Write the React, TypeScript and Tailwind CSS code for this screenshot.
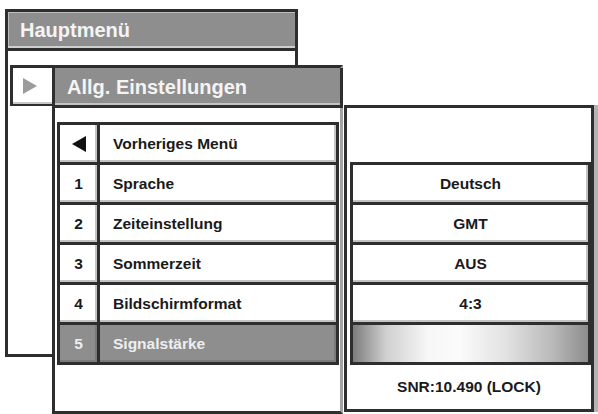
const DARK = "border-[#2e2e2e]";

type Row = { n: string; label: string; value?: string; selected?: boolean; gauge?: boolean };

const rows: Row[] = [
  { n: "◀", label: "Vorheriges Menü" },
  { n: "1", label: "Sprache", value: "Deutsch" },
  { n: "2", label: "Zeiteinstellung", value: "GMT" },
  { n: "3", label: "Sommerzeit", value: "AUS" },
  { n: "4", label: "Bildschirmformat", value: "4:3" },
  { n: "5", label: "Signalstärke", selected: true, gauge: true },
];

function LeftArrow() {
  return (
    <svg width="16" height="16" viewBox="0 0 16 16">
      <polygon points="15,0 15,16 1,8" fill="#111" />
    </svg>
  );
}

function RightArrow() {
  return (
    <svg width="15" height="16" viewBox="0 0 15 16">
      <polygon points="0,0 0,16 14,8" fill="#9c9c9c" />
    </svg>
  );
}

export default function App() {
  return (
    <div
      className="relative w-[598px] h-[414px] bg-white overflow-hidden"
      style={{ fontFamily: '"Liberation Sans", Arial, Helvetica, sans-serif' }}
    >
      {/* Hauptmenü window */}
      <div className={`absolute left-[5px] top-[9px] w-[293px] h-[348px] border-[3px] ${DARK} bg-white flex flex-col`}>
        <div
          className={`h-[39px] shrink-0 bg-[#8e8e8e] border-b-[3px] ${DARK} shadow-[inset_0_-2px_0_#cfcfcf,inset_1px_1px_0_#bdbdbd] flex items-center pl-[12px] text-[20px] font-bold text-[#f4f4f4]`}
        >
          Hauptmenü
        </div>
        <div className="pt-[14px] pl-[2px]">
          <div
            className={`w-[46px] h-[41px] border-t-[3px] border-l-[3px] border-b-[2px] ${DARK} bg-white shadow-[inset_-2px_-2px_0_#c8c8c8] flex items-center pl-[10px]`}
          >
            <RightArrow />
          </div>
        </div>
      </div>

      {/* Allg. Einstellungen window + value panel */}
      <div className="absolute left-[52px] top-[65px] flex items-start">
        <div className={`w-[291px] h-[349px] border-[3px] ${DARK} border-r-[#a3a3a3] bg-white flex flex-col`}>
          <div
            className={`h-[40px] shrink-0 bg-[#8e8e8e] border-b-[3px] ${DARK} shadow-[3px_0_0_#2e2e2e,inset_0_-2px_0_#c4c4c4] flex items-center pl-[12px] text-[20px] font-bold text-[#f4f4f4]`}
          >
            Allg. Einstellungen
          </div>
          <div className="pt-[14px] pl-[2px]">
            <div className={`w-[282px] border-r-[3px] border-b-[3px] ${DARK} flex flex-col`}>
              {rows.map((r) => (
                <div key={r.label} className={`h-[40px] flex border-t-[3px] ${DARK}`}>
                  <div
                    className={`w-[40px] shrink-0 border-l-[3px] ${DARK} flex items-center justify-center text-[15.5px] font-bold ${
                      r.selected
                        ? "bg-[#8e8e8e] text-[#eeeeee] shadow-[inset_-2px_-2px_0_#7a7a7a]"
                        : "bg-white text-[#1a1a1a] shadow-[inset_-2px_-2px_0_#c4c4c4]"
                    }`}
                  >
                    {r.n === "◀" ? <LeftArrow /> : r.n}
                  </div>
                  <div
                    className={`flex-1 border-l-[3px] ${DARK} flex items-center pl-[13px] text-[15.5px] font-bold ${
                      r.selected
                        ? "bg-[#8e8e8e] text-[#eeeeee] shadow-[inset_-2px_-2px_0_#7a7a7a]"
                        : "bg-white text-[#1a1a1a] shadow-[inset_-2px_-2px_0_#c4c4c4]"
                    }`}
                  >
                    {r.label}
                  </div>
                </div>
              ))}
            </div>
          </div>
        </div>

        <div
          className={`ml-[1px] mt-[40px] w-[250px] h-[307px] border-[3px] ${DARK} bg-white shadow-[4px_0_0_#b3b3b3] flex flex-col`}
        >
          <div className="pt-[54px] pl-[3px]">
            <div className={`border-r-[3px] border-b-[3px] ${DARK} flex flex-col`}>
              {rows.slice(1).map((r) => (
                <div key={r.label} className={`h-[40px] flex border-t-[3px] ${DARK}`}>
                  {r.gauge ? (
                    <div
                      className={`flex-1 border-l-[3px] ${DARK} bg-[linear-gradient(to_right,#7c7c7c_0%,#cfcfcf_14%,#f7f7f7_32%,#fbfbfb_45%,#e2e2e2_65%,#b9b9b9_85%,#8d8d8d_100%)]`}
                    />
                  ) : (
                    <div
                      className={`flex-1 border-l-[3px] ${DARK} bg-white shadow-[inset_-2px_-2px_0_#c4c4c4] flex items-center justify-center text-[15.5px] font-bold text-[#1a1a1a]`}
                    >
                      {r.value}
                    </div>
                  )}
                </div>
              ))}
            </div>
          </div>
          <div className="flex-1 flex items-center justify-center text-[15.5px] font-bold text-[#1a1a1a]">
            SNR:10.490 (LOCK)
          </div>
        </div>
      </div>
    </div>
  );
}
